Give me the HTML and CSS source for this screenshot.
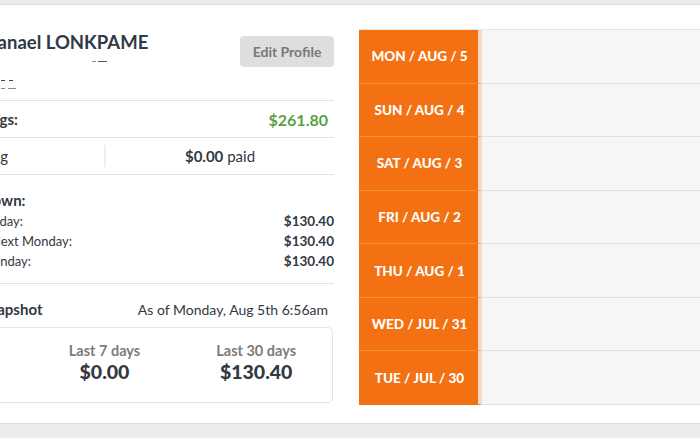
FILE: index.html
```html
<!DOCTYPE html>
<html>
<head>
<meta charset="utf-8">
<link rel="stylesheet" href="styles.css">
</head>
<body>
<div class="top-strip"></div>
<div class="panel">
  <div class="left">
    <div class="profile">
      <div class="avatar"></div>
      <div class="who">
        <div class="name">Nathanael LONKPAME</div>
        <div class="meta1"><span class="dash"></span><span class="dash long"></span></div>
        <div class="meta2"><span class="dash dark"></span><span class="dash dark"></span></div>
        <div class="meta3"><span class="dash"></span><span class="dash long"></span></div>
      </div>
      <button class="edit">Edit Profile</button>
    </div>
    <div class="row earnings">
      <span class="label">Earnings:</span>
      <span class="green">$261.80</span>
    </div>
    <div class="row pending">
      <div class="cell left-cell"><b>$0.00</b> pending</div>
      <div class="vsep"></div>
      <div class="cell right-cell"><b>$0.00</b> paid</div>
    </div>
    <div class="breakdown">
      <div class="heading bd-head">Earnings Breakdown:</div>
      <div class="line"><span class="l1">Today:</span><b>$130.40</b></div>
      <div class="line"><span class="l2">Next Monday:</span><b>$130.40</b></div>
      <div class="line"><span class="l3">Monday:</span><b>$130.40</b></div>
    </div>
    <div class="snapshot">
      <div class="snap-head">
        <span class="heading snap-title">Earnings Snapshot</span>
        <span class="asof">As of Monday, Aug 5th 6:56am</span>
      </div>
      <div class="snap-box">
        <div class="stat"><div class="stat-label">Today</div><div class="stat-val">$0.00</div></div>
        <div class="stat"><div class="stat-label">Last 7 days</div><div class="stat-val">$0.00</div></div>
        <div class="stat"><div class="stat-label">Last 30 days</div><div class="stat-val">$130.40</div></div>
      </div>
    </div>
  </div>
  <div class="right">
    <div class="cal">
      <div class="day">MON / AUG / 5</div><div class="slot"></div>
      <div class="day">SUN / AUG / 4</div><div class="slot"></div>
      <div class="day">SAT / AUG / 3</div><div class="slot"></div>
      <div class="day">FRI / AUG / 2</div><div class="slot"></div>
      <div class="day">THU / AUG / 1</div><div class="slot"></div>
      <div class="day">WED / JUL / 31</div><div class="slot"></div>
      <div class="day last">TUE / JUL / 30</div><div class="slot"></div>
    </div>
  </div>
</div>
</body>
</html>
```

FILE: styles.css
```css
* { box-sizing: border-box; }
html, body {
  margin: 0;
  padding: 0;
  background: #ececec;
  overflow: hidden;
  width: 700px;
  height: 438px;
  font-family: "Lato", "Open Sans", sans-serif;
  color: #333841;
}
.top-strip { height: 4px; background: #ececec; }
.panel {
  background: #fff;
  border-top: 1px solid #dcdcdc;
  border-bottom: 1px solid #d9d9d9;
  height: 420px;
  display: flex;
  width: 900px;
}
.left {
  margin-left: -124px;
  width: 458px;
  flex: none;
}
.profile {
  display: flex;
  align-items: flex-start;
  height: 96px;
  padding-top: 26px;
  border-bottom: 1px solid #e3e3e3;
}
.avatar { width: 64px; height: 64px; margin-right: 16px; flex: none; }
.who { flex: 1; }
.name {
  font-size: 18.5px;
  font-weight: 700;
  line-height: 22px;
  color: #323946;
  margin-left: 1px;
}
.meta1 { display: flex; gap: 2px; margin-left: 136px; margin-top: 8px; height: 1px; }
.meta2 { display: flex; gap: 4px; margin-left: 45px; margin-top: 18px; height: 1px; }
.meta3 { display: flex; gap: 3px; margin-left: 45px; margin-top: 7px; height: 1px; }
.dash { display: block; width: 4px; height: 1px; background: #8a8a8a; }
.dash.dark { background: #444; }
.dash.long { width: 8px; }
.meta1 .dash.long { width: 9px; background: #555; }
.edit {
  margin-top: 5px;
  width: 94px;
  height: 31px;
  border: none;
  border-radius: 4px;
  background: #dedede;
  color: #787878;
  font-family: inherit;
  font-size: 14px;
  font-weight: 700;
  padding: 0;
}
.row {
  display: flex;
  align-items: center;
  height: 37px;
  border-bottom: 1px solid #e3e3e3;
  font-size: 15px;
}
.earnings { justify-content: space-between; padding-right: 6px; }
.label { font-weight: 700; margin-left: 81px; }
.green { color: #5aa03e; font-weight: 700; font-size: 16px; }
.pending .left-cell { flex: 0 0 228px; text-align: right; padding-right: 96px; }
.pending .right-cell { flex: 1; text-align: center; }
.vsep { flex: none; width: 2px; height: 22px; background: #efefef; }
.breakdown {
  height: 109px;
  border-bottom: 1px solid #e3e3e3;
  padding-top: 16px;
}
.heading { font-size: 15px; font-weight: 700; line-height: 18px; display: block; }
.bd-head { margin-left: 9px; margin-bottom: 2px; }
.line {
  display: flex;
  justify-content: space-between;
  font-size: 13px;
  line-height: 20px;
}
.line b { font-size: 13.5px; }
.l1 { margin-left: 110px; }
.l2 { margin-left: 115px; }
.l3 { margin-left: 105px; }
.snapshot { padding-top: 16px; }
.snap-head {
  display: flex;
  justify-content: space-between;
  align-items: center;
  padding-right: 6px;
  height: 18px;
}
.snap-title { margin-left: 44px; }
.asof { font-size: 14px; }
.snap-box {
  margin-top: 9px;
  border: 1px solid #e4e4e4;
  border-radius: 5px;
  height: 76px;
  width: 457px;
  display: grid;
  grid-template-columns: 1fr 1fr 1fr;
  align-content: center;
  padding-bottom: 4px;
}
.stat { text-align: center; }
.stat-label { font-size: 14.5px; font-weight: 700; color: #7b7b7b; line-height: 17px; }
.stat-val { font-size: 19.5px; font-weight: 900; line-height: 26px; }
.right {
  margin-left: 25px;
  padding-top: 24px;
  flex: 1;
}
.cal {
  display: grid;
  grid-template-columns: 123px 1fr;
  grid-template-rows: repeat(7, 1fr);
  height: 376px;
  border-top: 1px solid #e6e6e6;
}
.day {
  background: #f37113;
  color: #fff;
  font-size: 13.5px;
  font-weight: 900;
  display: flex;
  align-items: center;
  justify-content: center;
  border-bottom: 1px solid #f8922e;
  border-right: 4px solid #f8d8c8;
  padding-left: 2px;
}
.day.last { border-bottom-color: #ea6d15; }
.slot {
  background: #f5f6f6;
  border-bottom: 1px solid #e1e2e2;
}
```
